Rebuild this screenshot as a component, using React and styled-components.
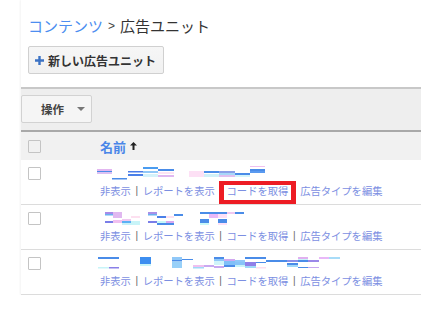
import React from "react";
import styled, { createGlobalStyle } from "styled-components";

const GlobalStyle = createGlobalStyle`
  body {
    margin: 0;
    background: #fff;
    font-family: "Noto Sans CJK JP", "Noto Sans", sans-serif;
    color: #333;
  }
`;

// obfuscated name pixels: [x, y, w, h, colour]
const rows = [
  {
    highlight: true,
    pixels: [
      [0, 4, 15, 2, "#e2b6f0"], [0, 6, 15, 1, "#4a8ce8"], [0, 7, 15, 2, "#dcc0f2"],
      [15, 13, 15, 1.5, "#4a8ce8"],
      [31, 6, 15, 1.5, "#4a7ce8"], [31, 9, 15, 2, "#4a80e8"],
      [46, 2, 15, 2, "#4a9cf0"], [46, 6, 15, 2, "#90c8f8"], [46, 9, 15, 3, "#d4f2fa"],
      [61, 4, 16, 2, "#4a8ce8"], [61, 7, 16, 2, "#fde4f4"], [61, 10, 16, 2, "#e0b8f0"],
      [92, 6, 15, 6, "#fde0f5"],
      [107, 6, 15, 2, "#4a8ce8"], [107, 9, 15, 3, "#d0f0f8"],
      [122, 6, 16, 2, "#8aa0e8"], [122, 8, 16, 2, "#a8d8f8"], [122, 10, 16, 2, "#e0c0f0"],
      [138, 8, 15, 2, "#4a8ce8"], [138, 10, 15, 2, "#d4f4fa"],
      [153, 1, 15, 1, "#f0c0f0"], [153, 4, 15, 2, "#4a8ce8"], [153, 6, 15, 2, "#5a9af0"],
    ],
  },
  {
    pixels: [
      [8, 2, 8, 2, "#a78be8"], [8, 4, 8, 1.5, "#6ab0f0"], [8, 11, 8, 2, "#7a7ee8"],
      [16, 2, 9, 6, "#e0b8f0"], [16, 10, 9, 3, "#f0c0f0"],
      [25, 9, 9, 2, "#f0c8f0"], [25, 11, 9, 2, "#5ab0f5"], [25, 13, 9, 2, "#c8f0f8"],
      [34, 6, 9, 2, "#fde0f0"], [34, 11, 9, 4, "#c8f4f8"],
      [51, 2, 9, 2, "#a890e8"], [51, 4, 9, 1.5, "#6ab0f0"], [51, 11, 9, 2, "#7a7ee8"],
      [60, 6, 9, 2, "#4a80e8"], [60, 11, 9, 2, "#c8f8f8"], [60, 13, 9, 2, "#4a8ce8"],
      [69, 6, 8, 2, "#fde0f0"], [69, 11, 8, 2, "#d8a8f0"], [69, 13, 8, 2, "#4a8ce8"],
      [77, 4, 9, 2, "#4a8ce8"],
      [103, 2, 9, 2, "#4a8ce8"], [103, 9, 9, 4, "#4a8ce8"], [103, 13, 9, 2, "#c8f8f8"],
      [112, 2, 9, 2, "#4a8ce8"], [112, 4, 9, 4, "#e8b8f8"],
      [121, 2, 9, 2, "#4a8ce8"], [121, 4, 9, 4, "#fde0f8"], [121, 9, 9, 4, "#4a8ce8"], [121, 13, 9, 2, "#fde0f8"],
      [130, 2, 8, 2, "#f0c8f0"],
      [138, 2, 9, 2, "#4a8ce8"],
    ],
  },
  {
    pixels: [
      [1, 2, 21, 2, "#4a8ce8"], [1, 12, 11, 1.5, "#c8f4f8"], [12, 12, 10, 1.5, "#8a80e8"],
      [43, 2, 11, 7, "#3d8ef0"], [43, 9, 11, 2, "#c8f4f8"],
      [75, 2, 10, 3, "#90c8f8"], [75, 5, 10, 1.5, "#4a8ce8"], [75, 6.5, 10, 6.5, "#98d0f8"],
      [85, 4, 11, 1, "#4a8ce8"],
      [96, 10, 11, 2, "#f0c0f0"], [96, 12, 11, 1.5, "#a0d8f8"],
      [107, 10, 10, 2, "#c8a8f0"],
      [117, 2, 10, 2, "#4a8ce8"], [117, 4, 10, 2, "#90c8f8"], [117, 6, 10, 4, "#d0f4fa"], [117, 11, 10, 2, "#c8a8f0"],
      [127, 4, 11, 2, "#d0a8f0"], [127, 6, 11, 4, "#80c0f8"], [127, 10, 11, 2, "#4a8ce8"],
      [138, 5, 10, 2, "#90c8f8"], [138, 7, 10, 3, "#88c4f8"], [138, 10, 10, 2, "#c8f4f8"],
      [148, 2, 11, 2, "#4a8ce8"], [148, 7, 11, 4, "#9080e8"], [148, 11, 11, 2, "#a0d8f8"],
      [159, 2, 10, 2, "#4a8ce8"], [159, 7, 10, 1, "#4a8ce8"], [159, 12, 10, 1.5, "#fde0f0"],
      [169, 5, 21, 2, "#4a8ce8"],
      [190, 5, 11, 2, "#8a90e8"], [190, 8, 11, 2, "#4a8ce8"], [190, 10, 11, 2, "#a0d8f8"],
      [201, 2, 10, 2, "#e0b0f0"], [201, 4, 10, 1, "#c8f4f8"], [201, 5, 10, 2, "#4a8ce8"], [201, 12, 10, 1, "#4a8ce8"],
      [211, 5, 11, 2, "#9a88e8"], [211, 12, 11, 1, "#c8a8f0"],
      [222, 2, 10, 2, "#e8b8f8"],
      [232, 2, 11, 2, "#a8dcf8"],
    ],
  },
];

function App() {
  return (
    <>
      <GlobalStyle />
      <Page>
        <Head>
          <Crumbs>
            <CrumbLink>コンテンツ</CrumbLink>
            <CrumbSep>&gt;</CrumbSep>
            広告ユニット
          </Crumbs>
          <NewButton>
            <svg width="9" height="9" viewBox="0 0 9 9">
              <path d="M3.3 0h2.4v3.3H9v2.4H5.7V9H3.3V5.7H0V3.3h3.3z" fill="#3b72c4" />
            </svg>
            新しい広告ユニット
          </NewButton>
        </Head>

        <Toolbar>
          <ActionButton>
            操作
            <svg width="8" height="4" viewBox="0 0 8 4">
              <path d="M0 0h8L4 4z" fill="#777" />
            </svg>
          </ActionButton>
        </Toolbar>

        <HeaderRow>
          <CheckCell>
            <CheckBox />
          </CheckCell>
          <NameHead>
            名前
            <svg width="7" height="8" viewBox="0 0 7 8">
              <path d="M3.5 0L7 3.6H4.5V8h-2V3.6H0z" fill="#222" />
            </svg>
          </NameHead>
        </HeaderRow>

        {rows.map((row, i) => (
          <Row key={i}>
            <CheckCell>
              <CheckBox />
            </CheckCell>
            <NameCell>
              <svg width="250" height="15" viewBox="0 0 250 15">
                {row.pixels.map(([x, y, w, h, c], j) => (
                  <rect key={j} x={x} y={y} width={w} height={h} fill={c} />
                ))}
              </svg>
              <Links>
                <Link>非表示</Link>
                <Bar>|</Bar>
                <Link>レポートを表示</Link>
                <Bar>|</Bar>
                <Link $boxed={row.highlight}>コードを取得</Link>
                <Bar>|</Bar>
                <Link>広告タイプを編集</Link>
              </Links>
            </NameCell>
          </Row>
        ))}
      </Page>
    </>
  );
}

export default App;

const Page = styled.div`
  margin-left: 21px;
  width: 400px;
  box-shadow: -1px 0 2px rgba(0, 0, 0, 0.05);
`;

const Head = styled.div`
  padding: 15px 0 13px 7px;
  display: flex;
  flex-direction: column;
  align-items: flex-start;
  background: #fff;
`;

const Crumbs = styled.div`
  font-size: 15px;
  line-height: 22px;
  color: #333;
  display: flex;
  align-items: center;
`;

const CrumbLink = styled.span`
  color: #4d8ef0;
`;

const CrumbSep = styled.span`
  font-family: "Liberation Sans", Arial, sans-serif;
  font-size: 12px;
  margin: 0 5px;
  color: #444;
`;

const NewButton = styled.button`
  margin-top: 9px;
  height: 28px;
  width: 136px;
  box-sizing: border-box;
  padding: 0 0 0 6px;
  display: flex;
  align-items: center;
  gap: 4px;
  border: 1px solid #d0d0d0;
  border-radius: 2px;
  background: linear-gradient(#f6f6f6, #f1f1f1);
  font-family: inherit;
  font-size: 12px;
  font-weight: 700;
  color: #333;
  white-space: nowrap;
`;

const Toolbar = styled.div`
  border-top: 2px solid #c8c8c8;
  border-bottom: 2px solid #a9a9a9;
  background: #eeeeee;
  padding: 6px 0 7px;
  display: flex;
`;

const ActionButton = styled.button`
  width: 71px;
  height: 28px;
  box-sizing: border-box;
  padding: 0 6px 0 19px;
  display: flex;
  align-items: center;
  justify-content: space-between;
  border: 1px solid #d2d2d2;
  border-radius: 2px;
  background: #f5f5f5;
  font-family: inherit;
  font-size: 11.5px;
  font-weight: 700;
  color: #444;
`;

const HeaderRow = styled.div`
  height: 28px;
  background: #f1f1f1;
  display: flex;
  align-items: center;
`;

const Row = styled.div`
  height: 44px;
  border-bottom: 1px solid #dcdcdc;
  display: flex;
  align-items: flex-start;

  & > div:first-child {
    padding-top: 7px;
  }
`;

const CheckCell = styled.div`
  width: 79px;
  padding-left: 7px;
  box-sizing: border-box;
  display: flex;
`;

const CheckBox = styled.span`
  width: 13px;
  height: 13px;
  box-sizing: border-box;
  border: 1px solid #c4c4c4;
  border-radius: 1px;
`;

const NameHead = styled.div`
  display: flex;
  align-items: center;
  gap: 4px;
  font-size: 13px;
  font-weight: 700;
  color: #4a86e8;
`;

const NameCell = styled.div`
  padding-top: 5px;
  margin-left: -3px;
  display: flex;
  flex-direction: column;

  svg {
    display: block;
  }
`;

const Links = styled.div`
  margin-top: 4px;
  padding-left: 3px;
  display: flex;
  align-items: center;
  font-size: 10.3px;
  line-height: 14px;
  white-space: nowrap;
`;

const Link = styled.span`
  position: relative;
  display: inline-block;
  color: #7c8fe2;

  ${(p) =>
    p.$boxed &&
    `
    &::after {
      content: "";
      position: absolute;
      top: -3px;
      bottom: -6px;
      left: -8px;
      right: -8px;
      border: 4px solid #ed1c24;
      border-width: 4px 5px;
    }
  `}
`;

const Bar = styled.span`
  margin: 0 4.6px;
  color: #666;
  font-family: "Liberation Sans", Arial, sans-serif;
  font-size: 10px;
`;
